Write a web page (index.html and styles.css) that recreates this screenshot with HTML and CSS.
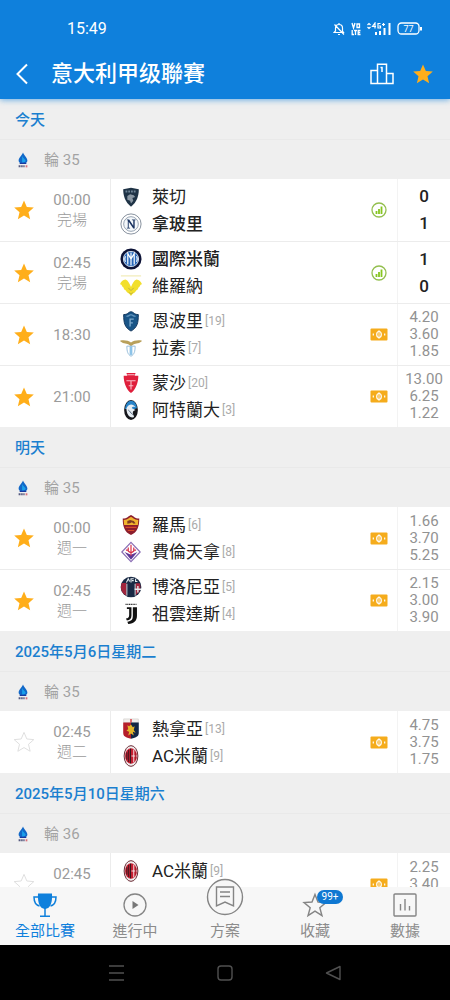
FILE: index.html
```html
<!DOCTYPE html>
<html lang="zh-Hant">
<head>
    <meta charset="UTF-8">
    <meta name="viewport" content="width=device-width, initial-scale=1.0">
    <title>意大利甲级聯賽</title>
    <link rel="stylesheet" href="styles.css">
</head>
<body>
    <!-- shared icons and crests -->
    <svg class="sprite" aria-hidden="true">
        <symbol id="star" viewBox="0 0 24 24"><path d="M12 1.500l3.100 7.200 7.600.7-5.800 5.100 1.800 7.600L12 18.100l-6.700 4 1.800-7.600L1.300 9.400l7.600-.7z"/></symbol>
        <symbol id="serie-a" viewBox="0 0 16 18">
            <path d="M8 .5C7 3.500 3 6.500 3 9.500c0 2.500 2 3.500 5 3.500s5-1 5-3.500C13 6.500 9 3.500 8 .5z" fill="#1268c8"/>
            <path d="M7 4v8c2.500 0 4-1 4-2.500S8 7 7 4z" fill="#1ba0ea"/>
            <path d="M4.500 12h7l.5 1.500H4z" fill="#1a3aa0"/>
            <path d="M3 16.200h7" stroke="#55597f" stroke-width="2.400" stroke-dasharray="1.600 .5"/>
            <path d="M11 16.200h2" stroke="#d8707c" stroke-width="2.400"/>
        </symbol>
        <symbol id="stats" viewBox="0 0 16 16">
            <circle cx="8" cy="8" r="7" fill="none" stroke="#93bf4e" stroke-width="1.300"/>
            <path d="M5.500 9v3M8 7v5M10.500 4.500V12" stroke="#86c61f" stroke-width="1.800"/>
        </symbol>
        <symbol id="odds" viewBox="0 0 18 13">
            <rect x=".5" y=".5" width="17" height="12" rx="1" fill="#f5ac1c"/>
            <ellipse cx="9" cy="6.500" rx="2.300" ry="3" fill="none" stroke="#fff" stroke-width="1.200"/>
            <path d="M9 2v9" stroke="#fff" stroke-width=".8"/>
            <path d="M3.300 5.500v2M14.700 5.500v2" stroke="#fff" stroke-width="1.200"/>
        </symbol>

        <symbol id="lecce" viewBox="0 0 24 24">
            <path d="M3.500 3.500L12 2l8.500 1.500c0 7-2 14-8.500 19C5.500 17.500 3.500 10.500 3.500 3.500z" fill="#1f3346"/>
            <path d="M6 6h12" stroke="#6f8496" stroke-width="2" stroke-dasharray="2 1"/>
            <path d="M8 11l3-2 4 1 1.500 2-3 1 1 3-2.500 3-1-3-3-1z" fill="#8b98a4"/>
        </symbol>
        <symbol id="napoli" viewBox="0 0 24 24">
            <circle cx="12" cy="12" r="11" fill="#fff" stroke="#7d8896"/>
            <circle cx="12" cy="12" r="8" fill="#f4f8fb" stroke="#8f9cac"/>
            <path d="M7.500 7H10l4.500 7V8H13V7h4v1h-1v9h-1.500L9.500 9.500V16H11v1H7.500v-1h1V8h-1z" fill="#183260"/>
        </symbol>
        <symbol id="inter" viewBox="0 0 24 24">
            <circle cx="12" cy="12" r="11.500" fill="#0c1236"/>
            <circle cx="12" cy="12" r="8.300" fill="#2766b8" stroke="#dbe8f5"/>
            <path d="M12 5v14M8.500 18V6l3.500 6 3.500-6v12M6 9c-1 2-1 4 0 6M18 9c1 2 1 4 0 6" fill="none" stroke="#fff" stroke-width="1.300"/>
        </symbol>
        <symbol id="verona" viewBox="0 0 24 24">
            <path d="M1 1h22" stroke="#ece5a2" stroke-width="1"/>
            <path d="M0 10c1-2 3-5 6-5 3 1 4 4 6 8 2-4 3-7 6-8 3 0 5 3 6 5-2 0-2 2-3 3-1 0-1 2-2 3-1 0-2 2-3 3-2 1-3 2-4 4-1-2-2-3-4-4-1-1-2-3-3-3-1-1-1-3-2-3-1-1-1-3-3-3z" fill="#f2df2c"/>
            <path d="M9 14l3 3 3-3M10 19l2 2 2-2" fill="none" stroke="#b9ad42" stroke-width="1"/>
        </symbol>
        <symbol id="empoli" viewBox="0 0 24 24">
            <path d="M4 5c5 0 5-3 8-3s3 3 8 3c0 9-1 14-8 18C5 19 4 14 4 5z" fill="#195587" stroke="#0c3058"/>
            <path d="M7 7c3 0 4-2 5-2s2 2 5 2" fill="none" stroke="#5e91ba" stroke-width="1.500"/>
            <path d="M15 10h-4v8M11 14h3" fill="none" stroke="#7fabcd" stroke-width="1.500"/>
        </symbol>
        <symbol id="lazio" viewBox="0 0 24 24">
            <path d="M0 4c5-1 9 0 12 2 3-2 7-3 12-2-2 3-7 3-9 4l-3 2-3-2C7 7 2 7 0 4z" fill="#b9a05a"/>
            <path d="M7.500 10h9c0 6-1 9-4.500 11-3.500-2-4.500-5-4.500-11z" fill="#fff" stroke="#8fb8d6"/>
            <path d="M10.500 10h3v9l-1.500 1-1.500-1z" fill="#8cc3e8"/>
        </symbol>
        <symbol id="monza" viewBox="0 0 24 24">
            <path d="M7 1h10l-1 3h4c0 8-3 15-8 19C7 19 4 12 4 4h4z" fill="#df1f3c"/>
            <path d="M8 3h8M7 9.500h10M12 10v9M9.500 15h5" stroke="#f9bfc8" stroke-width="1.200"/>
        </symbol>
        <symbol id="atalanta" viewBox="0 0 24 24">
            <ellipse cx="12" cy="12" rx="7.500" ry="10.800" fill="#15161b"/>
            <path d="M12 2c-4 0-6 4-6.500 9h10l3-1C18 5 15.500 2 12 2z" fill="#2783c8"/>
            <path d="M7 10c3-5 7-5 10-1-3-1-4 0-4 1l4 2c-2 1-3 1-3 3 0 3 2 3 1 5-5 1-8-4-8-10z" fill="#e6edf3"/>
            <path d="M9 12c2 1 2 3 5 5" fill="none" stroke="#52647a"/>
        </symbol>
        <symbol id="roma" viewBox="0 0 24 24">
            <path d="M3 5c5 0 6-3 9-4 3 1 4 4 9 4 0 9-2 15-9 18C5 20 3 14 3 5z" fill="#8c1d2c"/>
            <path d="M4 6.500C9 6 10 4 12 3c2 1 3 3 8 3.500L19.500 12h-15z" fill="#f0b42e"/>
            <path d="M8 7.500l3-1 4 1 2 2.500-2 .5-2-1.500-2 1-3 .5z" fill="#7f3b22"/>
            <path d="M6 14.500h12M8.500 18h7" stroke="#d64a2e" stroke-width="1.300"/>
        </symbol>
        <symbol id="fiorentina" viewBox="0 0 24 24">
            <path d="M12 1.500L22 12 12 22.500 2 12z" fill="#fff" stroke="#8a6db4" stroke-width="1.300"/>
            <path d="M5 12l7 3 7-3-7 8.500z" fill="#5f3797"/>
            <path d="M12 4v12M9 7v4l3 2 3-2V7M9 10H6.500M15 10h2.500" fill="none" stroke="#d83248" stroke-width="1.300"/>
        </symbol>
        <symbol id="bologna" viewBox="0 0 24 24">
            <circle cx="12" cy="12" r="11.300" fill="#192944"/>
            <path d="M2 7.500h5v14C1 18 0 13 2 7.500zM17 8h4.500c2 5 0 10-4.500 13z" fill="#a1263d"/>
            <path d="M5 7c3-6 11-6 14 0z" fill="#182a42"/>
            <path d="M7 7l2-4 1.500 3M12 7V3h3M13 5h2M19 6h-2V3" fill="none" stroke="#e7edf2" stroke-width="1.200"/>
            <path d="M7.500 8.500v13M16.500 8.500v13" stroke="#dde2e7" stroke-width="1"/>
            <path d="M16 14.500h7M19.500 11v7" stroke="#e9ecef" stroke-width="1.500"/>
        </symbol>
        <symbol id="juventus" viewBox="0 0 24 24">
            <path d="M6 1.500h12" stroke="#333" stroke-width="1.600" stroke-dasharray="1.300 .6"/>
            <path d="M7.500 4.500h5v9c0 3.500-1.500 5-5 5.500l-1-2c2.500-.5 3.500-1.500 3.500-4V6.500H7.500z" fill="#111"/>
            <path d="M14 4.500h4.500V14c0 5.500-3 8.500-9.500 9l-1-2.500c4.500-.5 6-2.500 6-6.500z" fill="#111"/>
        </symbol>
        <symbol id="genoa" viewBox="0 0 24 24">
            <path d="M4 1h16v4H4z" fill="#f1efec" stroke="#cbc8c4" stroke-width=".6"/>
            <path d="M12 1v4" stroke="#d9333e" stroke-width="1.500"/>
            <path d="M3.500 5H12v17.500C6 21 3.500 20 3.500 16z" fill="#b51e2a"/>
            <path d="M12 5h8.500v11c0 4-2.500 5-8.500 6.500z" fill="#122746"/>
            <path d="M8 8l2 1 2-2 2 3 2-1-1 4 2 3-3-1 1 4-3-2-3 2 1-4-3-1 2-2z" fill="#e4b52a"/>
        </symbol>
        <symbol id="milan" viewBox="0 0 24 24">
            <ellipse cx="12" cy="12" rx="7.500" ry="11.300" fill="#f1eded" stroke="#5d1923"/>
            <ellipse cx="12" cy="12" rx="6.500" ry="8.500" fill="#c61f32"/>
            <path d="M7.500 8v8M9.500 5.500v13M11.500 4v16" stroke="#28161a" stroke-width="1"/>
            <path d="M15 5v14M12.500 12h6" stroke="#f4eeee" stroke-width="1"/>
            <path d="M17 8v8" stroke="#a01a2a"/>
        </symbol>
    </svg>

    <header>
        <div class="status-bar">
            <span class="clock">15:49</span>
            <div class="status-icons">
                <svg width="12" height="14" viewBox="0 0 12 14" fill="none" stroke="#fff" stroke-width="1.200"><path d="M2 10.500h8.500L9.500 9V6C9.500 3.500 8 2.500 6 2.500S2.500 4 2.500 6v3L1 10.500h1M5 12.500h2M6 1v1.500M1.500 2.500l9.500 10"/></svg>
                <svg width="10" height="14" viewBox="0 0 10 14" fill="none" stroke="#fff" stroke-width="1.300"><path d="M1 1l1.500 5L4 1M6 2h2.500v3.500H6zM1.200 8v4.500H3M3 8.500h3M4.500 8.500V13M9.500 8.500H7.200v4h2.300M7.200 10.500h2"/></svg>
                <svg width="24" height="14" viewBox="0 0 24 14" fill="none" stroke="#fff" stroke-width="1.200"><path d="M.5 3L2 1.500 3.500 3M.5 5L2 6.500 3.500 5M8 6.500V1L5.500 4.500H9M13.500 1.500H11v4.500h2.500V4H12M15 2.500h3M16.500 1v3"/><path d="M9 10v3M13 9v4M17.500 6v7M22.500 1v12" stroke-width="2"/></svg>
                <svg width="26" height="14" viewBox="0 0 26 14"><rect x="1" y="1" width="21" height="11" rx="3.500" fill="none" stroke="#fff" stroke-width="1.300"/><path d="M24 5v3.500" stroke="#fff" stroke-width="2"/><text x="11.500" y="10" text-anchor="middle" class="battery-text">77</text></svg>
            </div>
        </div>
        <div class="title-bar">
            <button class="icon-btn" aria-label="返回"><svg width="14" height="22" viewBox="0 0 14 22" fill="none" stroke="#fff" stroke-width="2"><path d="M12 1.500L2.500 11l9.500 9.500"/></svg></button>
            <h1>意大利甲级聯賽</h1>
            <button class="icon-btn" aria-label="積分榜"><svg width="24" height="22" viewBox="0 0 24 22" fill="none" stroke="#fff" stroke-width="1.500"><path d="M7.500 20.500V1.200h9v19.300M7.500 7.500H1v13h22V10.500h-6.500M10.500 4.500H12V9"/></svg></button>
            <button class="icon-btn star on" aria-label="收藏聯賽"><svg width="22" height="22"><use href="#star"/></svg></button>
        </div>
    </header>

    <main>
        <section>
            <h2>今天</h2>
            <h3><svg width="14" height="16"><use href="#serie-a"/></svg>輪 35</h3>
            <ul>
                <li class="match">
                    <button class="star on" aria-label="收藏"><svg width="22" height="22"><use href="#star"/></svg></button>
                    <div class="time"><span>00:00</span><span>完場</span></div>
                    <div class="teams">
                        <div class="team"><svg class="crest"><use href="#lecce"/></svg><span>萊切</span></div>
                        <div class="team"><svg class="crest"><use href="#napoli"/></svg><b>拿玻里</b></div>
                    </div>
                    <svg class="stats"><use href="#stats"/></svg>
                    <div class="score"><span>0</span><span>1</span></div>
                </li>
                <li class="match">
                    <button class="star on" aria-label="收藏"><svg width="22" height="22"><use href="#star"/></svg></button>
                    <div class="time"><span>02:45</span><span>完場</span></div>
                    <div class="teams">
                        <div class="team"><svg class="crest"><use href="#inter"/></svg><b>國際米蘭</b></div>
                        <div class="team"><svg class="crest"><use href="#verona"/></svg><span>維羅納</span></div>
                    </div>
                    <svg class="stats"><use href="#stats"/></svg>
                    <div class="score"><span>1</span><span>0</span></div>
                </li>
                <li class="match">
                    <button class="star on" aria-label="收藏"><svg width="22" height="22"><use href="#star"/></svg></button>
                    <div class="time"><span>18:30</span></div>
                    <div class="teams">
                        <div class="team"><svg class="crest"><use href="#empoli"/></svg><span>恩波里</span><small>[19]</small></div>
                        <div class="team"><svg class="crest"><use href="#lazio"/></svg><span>拉素</span><small>[7]</small></div>
                    </div>
                    <svg class="money"><use href="#odds"/></svg>
                    <div class="odds"><span>4.20</span><span>3.60</span><span>1.85</span></div>
                </li>
                <li class="match">
                    <button class="star on" aria-label="收藏"><svg width="22" height="22"><use href="#star"/></svg></button>
                    <div class="time"><span>21:00</span></div>
                    <div class="teams">
                        <div class="team"><svg class="crest"><use href="#monza"/></svg><span>蒙沙</span><small>[20]</small></div>
                        <div class="team"><svg class="crest"><use href="#atalanta"/></svg><span>阿特蘭大</span><small>[3]</small></div>
                    </div>
                    <svg class="money"><use href="#odds"/></svg>
                    <div class="odds"><span>13.00</span><span>6.25</span><span>1.22</span></div>
                </li>
            </ul>
        </section>

        <section>
            <h2>明天</h2>
            <h3><svg width="14" height="16"><use href="#serie-a"/></svg>輪 35</h3>
            <ul>
                <li class="match">
                    <button class="star on" aria-label="收藏"><svg width="22" height="22"><use href="#star"/></svg></button>
                    <div class="time"><span>00:00</span><span>週一</span></div>
                    <div class="teams">
                        <div class="team"><svg class="crest"><use href="#roma"/></svg><span>羅馬</span><small>[6]</small></div>
                        <div class="team"><svg class="crest"><use href="#fiorentina"/></svg><span>費倫天拿</span><small>[8]</small></div>
                    </div>
                    <svg class="money"><use href="#odds"/></svg>
                    <div class="odds"><span>1.66</span><span>3.70</span><span>5.25</span></div>
                </li>
                <li class="match">
                    <button class="star on" aria-label="收藏"><svg width="22" height="22"><use href="#star"/></svg></button>
                    <div class="time"><span>02:45</span><span>週一</span></div>
                    <div class="teams">
                        <div class="team"><svg class="crest"><use href="#bologna"/></svg><span>博洛尼亞</span><small>[5]</small></div>
                        <div class="team"><svg class="crest"><use href="#juventus"/></svg><span>祖雲達斯</span><small>[4]</small></div>
                    </div>
                    <svg class="money"><use href="#odds"/></svg>
                    <div class="odds"><span>2.15</span><span>3.00</span><span>3.90</span></div>
                </li>
            </ul>
        </section>

        <section>
            <h2>2025年5月6日星期二</h2>
            <h3><svg width="14" height="16"><use href="#serie-a"/></svg>輪 35</h3>
            <ul>
                <li class="match">
                    <button class="star" aria-label="收藏"><svg width="22" height="22"><use href="#star"/></svg></button>
                    <div class="time"><span>02:45</span><span>週二</span></div>
                    <div class="teams">
                        <div class="team"><svg class="crest"><use href="#genoa"/></svg><span>熱拿亞</span><small>[13]</small></div>
                        <div class="team"><svg class="crest"><use href="#milan"/></svg><span>AC米蘭</span><small>[9]</small></div>
                    </div>
                    <svg class="money"><use href="#odds"/></svg>
                    <div class="odds"><span>4.75</span><span>3.75</span><span>1.75</span></div>
                </li>
            </ul>
        </section>

        <section>
            <h2>2025年5月10日星期六</h2>
            <h3><svg width="14" height="16"><use href="#serie-a"/></svg>輪 36</h3>
            <ul>
                <li class="match">
                    <button class="star" aria-label="收藏"><svg width="22" height="22"><use href="#star"/></svg></button>
                    <div class="time"><span>02:45</span><span></span></div>
                    <div class="teams">
                        <div class="team"><svg class="crest"><use href="#milan"/></svg><span>AC米蘭</span><small>[9]</small></div>
                        <div class="team"><svg class="crest"><use href="#atalanta"/></svg></div>
                    </div>
                    <svg class="money"><use href="#odds"/></svg>
                    <div class="odds"><span>2.25</span><span>3.40</span><span></span></div>
                </li>
            </ul>
        </section>
    </main>

    <nav class="tabs">
        <a href="#" class="active">
            <svg width="26" height="26" viewBox="0 0 26 26"><path d="M6 1.500h14c.5 9-1.500 15-7 15.500C7.500 16.500 5.500 10.500 6 1.500z" fill="#0f80dc"/><path d="M6 5H2c0 5 1.500 8 5.500 9M20 5h4c0 5-1.500 8-5.500 9M13 16v8M8 24.200h10" fill="none" stroke="#0f80dc" stroke-width="1.500"/></svg>
            <span>全部比賽</span>
        </a>
        <a href="#">
            <svg width="26" height="26" viewBox="0 0 26 26"><circle cx="13" cy="13" r="11" fill="none" stroke="#858585" stroke-width="1.300"/><path d="M10.500 9l6 4-6 4z" fill="#777"/></svg>
            <span>進行中</span>
        </a>
        <a href="#" class="plan">
            <svg width="38" height="38" viewBox="0 0 38 38" fill="none" stroke="#858585" stroke-width="1.400"><circle cx="19" cy="19" r="17.500" fill="#f7f7f7"/><path d="M10.500 9h17v19L19 24l-8.500 4zM14 14h10M14 18.500h10"/></svg>
            <span>方案</span>
        </a>
        <a href="#">
            <svg width="26" height="26" viewBox="0 0 26 26" fill="none" stroke="#858585" stroke-width="1.400"><path d="M13 2.500l3 7.500 8 .5-6.200 5.200 2.200 8-7-4.500-7 4.500 2.200-8L2 10.500l8-.5z"/></svg>
            <em class="badge">99+</em>
            <span>收藏</span>
        </a>
        <a href="#">
            <svg width="26" height="26" viewBox="0 0 26 26" fill="none" stroke="#858585" stroke-width="1.400"><rect x="2" y="2" width="22" height="22" rx="1"/><path d="M8.500 12v6.500M13 7v11.500M17.500 14v4.500"/></svg>
            <span>數據</span>
        </a>
    </nav>

    <div class="system-bar">
        <button aria-label="選單"><svg width="22" height="20" viewBox="0 0 22 20" stroke="#505050" stroke-width="1.400"><path d="M3 3h15M3 10h15M3 17h15"/></svg></button>
        <button aria-label="主畫面"><svg width="22" height="20" viewBox="0 0 22 20" fill="none" stroke="#505050" stroke-width="1.400"><rect x="4" y="3" width="14" height="14" rx="3"/></svg></button>
        <button aria-label="上一頁"><svg width="22" height="20" viewBox="0 0 22 20" fill="none" stroke="#505050" stroke-width="1.400" stroke-linejoin="round"><path d="M18 3.500v13L4.500 10z"/></svg></button>
    </div>
</body>
</html>
```
FILE: styles.css
```css
:root {
    --blue: #0f80dc;
    --line: #ececec;
    --grey: #9b9b9b;
    --orange: #ffae1a;
}
* { box-sizing: border-box; }
body {
    font-family: Roboto, "Noto Sans CJK TC", sans-serif;
    margin: 0;
    height: 100vh;
    display: flex;
    flex-direction: column;
    background: #efefef;
    color: #222;
    font-size: 15px;
}
h1, h2, h3, ul { margin: 0; padding: 0; }
ul { list-style: none; }
button {
    background: none;
    border: none;
    padding: 0;
    cursor: pointer;
}
svg { display: block; flex-shrink: 0; }
.sprite { position: absolute; width: 0; height: 0; }

header {
    background: var(--blue);
    color: white;
    box-shadow: 0 1px 6px rgba(15, 128, 220, 0.6);
    z-index: 2;
}
.status-bar {
    display: flex;
    justify-content: space-between;
    align-items: flex-end;
    height: 48px;
    padding: 0 27px 10px 67px;
}
.clock { font-size: 16px; line-height: 18px; }
.status-icons {
    display: flex;
    align-items: center;
    height: 18px;
    gap: 6px;
}
.battery-text {
    font-size: 9px;
    fill: #fff;
}
.title-bar {
    display: flex;
    align-items: center;
    height: 51px;
    padding: 0 16px 0 15px;
}
.title-bar h1 {
    flex: 1;
    margin-left: 22px;
    font-size: 22px;
    line-height: 30px;
    font-weight: 500;
}
.icon-btn + .icon-btn { margin-left: 18px; }

main {
    flex: 1;
    min-height: 0;
    overflow: hidden;
}
h2 {
    height: 41px;
    padding: 0 15px;
    border-bottom: 1px solid #e9e9e9;
    color: #1b7fcf;
    font-size: 15px;
    line-height: 42px;
    font-weight: 500;
}
h3 {
    display: flex;
    align-items: center;
    gap: 14px;
    height: 39px;
    padding: 0 16px;
    color: #a3a3a3;
    font-size: 15px;
    line-height: 36px;
    font-weight: 400;
}

.match {
    display: grid;
    grid-template-columns: 48px 62px 1fr 36px 53px;
    height: 62px;
    background: white;
}
.match + .match { border-top: 1px solid var(--line); }
.star {
    display: flex;
    align-items: center;
    justify-content: center;
}
.star svg {
    fill: white;
    stroke: #dcdcdc;
}
.star.on svg {
    fill: var(--orange);
    stroke: none;
}
.time {
    display: flex;
    flex-direction: column;
    justify-content: center;
    width: 48px;
    text-align: center;
    color: var(--grey);
    line-height: 20px;
}
.time span { min-height: 20px; }
.time span + span { font-weight: 300; }
.teams {
    display: flex;
    flex-direction: column;
    justify-content: center;
    padding-left: 9px;
    border-left: 1px solid var(--line);
}
.team {
    display: flex;
    align-items: center;
    height: 27px;
    font-size: 17px;
    line-height: 26px;
}
.crest {
    width: 22px;
    height: 22px;
    margin-right: 10px;
}
.team b { font-weight: 500; }
.team small {
    margin-left: 2px;
    color: #aaa;
    font-size: 12px;
}
.stats, .money { place-self: center; }
.stats { width: 16px; height: 16px; }
.money { width: 18px; height: 13px; }
.score, .odds {
    display: flex;
    flex-direction: column;
    justify-content: center;
    border-left: 1px solid #f3f3f3;
    text-align: center;
}
.score {
    font-size: 17px;
    line-height: 27px;
    font-weight: 500;
}
.odds {
    color: #929292;
    line-height: 17px;
}
.odds span { min-height: 17px; }

.tabs {
    display: grid;
    grid-template-columns: repeat(5, 1fr);
    grid-template-rows: 58px;
    background: #f7f7f7;
    z-index: 1;
}
.tabs a {
    position: relative;
    display: flex;
    flex-direction: column;
    align-items: center;
    justify-content: flex-end;
    gap: 3px;
    padding-bottom: 4px;
    color: #8c8c8c;
    font-size: 15px;
    line-height: 20px;
    text-decoration: none;
}
.tabs a.active { color: var(--blue); }
.tabs .plan { gap: 5px; }
.badge {
    position: absolute;
    top: 3px;
    left: 50%;
    width: 26px;
    margin-left: 2px;
    border-radius: 8px;
    background: #0f78d2;
    color: white;
    font-size: 10px;
    line-height: 14px;
    font-style: normal;
    text-align: center;
}

.system-bar {
    display: flex;
    justify-content: center;
    align-items: center;
    gap: 86px;
    height: 55px;
    background: black;
}
```
